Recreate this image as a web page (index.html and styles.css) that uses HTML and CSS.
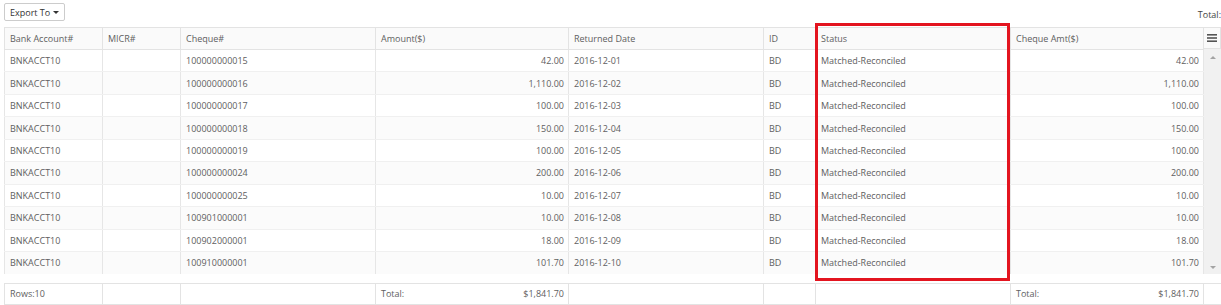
FILE: index.html
```html
<!DOCTYPE html>
<html>
<head>
<meta charset="utf-8">
<link rel="stylesheet" href="styles.css">
</head>
<body>
<div class="toolbar">
  <button class="export-btn">Export To <span class="caret"></span></button>
  <span class="top-total">Total:</span>
</div>
<div class="grid">
  <div class="grid-main">
    <table class="data">
      <colgroup>
        <col style="width:98px"><col style="width:78px"><col style="width:195px"><col style="width:193px">
        <col style="width:195px"><col style="width:52px"><col style="width:195px"><col style="width:193px">
      </colgroup>
      <thead>
        <tr><th>Bank Account#</th><th>MICR#</th><th>Cheque#</th><th>Amount($)</th><th>Returned Date</th><th>ID</th><th>Status</th><th>Cheque Amt($)</th></tr>
      </thead>
      <tbody>
        <tr><td>BNKACCT10</td><td></td><td>100000000015</td><td class="num">42.00</td><td>2016-12-01</td><td>BD</td><td>Matched-Reconciled</td><td class="num">42.00</td></tr>
        <tr><td>BNKACCT10</td><td></td><td>100000000016</td><td class="num">1,110.00</td><td>2016-12-02</td><td>BD</td><td>Matched-Reconciled</td><td class="num">1,110.00</td></tr>
        <tr><td>BNKACCT10</td><td></td><td>100000000017</td><td class="num">100.00</td><td>2016-12-03</td><td>BD</td><td>Matched-Reconciled</td><td class="num">100.00</td></tr>
        <tr><td>BNKACCT10</td><td></td><td>100000000018</td><td class="num">150.00</td><td>2016-12-04</td><td>BD</td><td>Matched-Reconciled</td><td class="num">150.00</td></tr>
        <tr><td>BNKACCT10</td><td></td><td>100000000019</td><td class="num">100.00</td><td>2016-12-05</td><td>BD</td><td>Matched-Reconciled</td><td class="num">100.00</td></tr>
        <tr><td>BNKACCT10</td><td></td><td>100000000024</td><td class="num">200.00</td><td>2016-12-06</td><td>BD</td><td>Matched-Reconciled</td><td class="num">200.00</td></tr>
        <tr><td>BNKACCT10</td><td></td><td>100000000025</td><td class="num">10.00</td><td>2016-12-07</td><td>BD</td><td>Matched-Reconciled</td><td class="num">10.00</td></tr>
        <tr><td>BNKACCT10</td><td></td><td>100901000001</td><td class="num">10.00</td><td>2016-12-08</td><td>BD</td><td>Matched-Reconciled</td><td class="num">10.00</td></tr>
        <tr><td>BNKACCT10</td><td></td><td>100902000001</td><td class="num">18.00</td><td>2016-12-09</td><td>BD</td><td>Matched-Reconciled</td><td class="num">18.00</td></tr>
        <tr><td>BNKACCT10</td><td></td><td>100910000001</td><td class="num">101.70</td><td>2016-12-10</td><td>BD</td><td>Matched-Reconciled</td><td class="num">101.70</td></tr>
      </tbody>
    </table>
    <div class="vscroll">
      <div class="menu-cell">
        <svg width="10" height="8" viewBox="0 0 10 8"><rect x="0" y="0" width="10" height="1.6" fill="#555"/><rect x="0" y="3.2" width="10" height="1.6" fill="#555"/><rect x="0" y="6.4" width="10" height="1.6" fill="#555"/></svg>
      </div>
      <div class="track">
        <span class="arrow up"></span>
        <span class="arrow down"></span>
      </div>
    </div>
  </div>
  <table class="footer">
    <colgroup>
      <col style="width:98px"><col style="width:78px"><col style="width:195px"><col style="width:193px">
      <col style="width:195px"><col style="width:52px"><col style="width:195px"><col style="width:193px"><col style="width:18px">
    </colgroup>
    <tr>
      <td>Rows:10</td><td></td><td></td>
      <td><div class="tot"><span>Total:</span><span>$1,841.70</span></div></td>
      <td></td><td></td><td></td>
      <td><div class="tot"><span>Total:</span><span>$1,841.70</span></div></td>
      <td class="blank"></td>
    </tr>
  </table>
  <div class="highlight"></div>
</div>
</body>
</html>
```

FILE: styles.css
```css
html, body {
  margin: 0;
  padding: 0;
  background: #fff;
  font-family: "Open Sans", "Noto Sans", sans-serif;
  font-size: 9px;
  color: #606060;
  width: 1221px;
  overflow: hidden;
}

.toolbar {
  height: 27px;
  display: flex;
  justify-content: space-between;
  align-items: flex-start;
}

.export-btn {
  margin: 3px 0 0 4px;
  height: 18px;
  padding: 0 5px;
  border: 1px solid #ccc;
  border-radius: 2px;
  background: #fff;
  font-family: inherit;
  font-size: 9px;
  color: #333;
  display: flex;
  align-items: center;
  gap: 3px;
  white-space: nowrap;
}

.caret {
  display: inline-block;
  width: 0;
  height: 0;
  border-left: 3px solid transparent;
  border-right: 3px solid transparent;
  border-top: 3px solid #333;
  margin-top: 1px;
}

.top-total {
  margin-top: 8px;
  color: #444;
}

.grid {
  position: relative;
  margin-left: 4px;
  width: 1217px;
}

.grid-main {
  display: flex;
}

table {
  border-collapse: collapse;
  table-layout: fixed;
}

.data {
  width: 1199px;
}

.data th {
  height: 21px;
  font-weight: normal;
  text-align: left;
  padding: 0 5px;
  background: #fafafa;
  border: 1px solid #e3e3e3;
  white-space: nowrap;
  overflow: hidden;
}

.data td {
  height: 22.45px;
  padding: 0 4px 0 5px;
  border-left: 1px solid #e6e6e6;
  border-right: 1px solid #e6e6e6;
  border-bottom: 1px solid #f0f0f0;
  white-space: nowrap;
  box-sizing: border-box;
}

.data tbody tr:nth-child(even) td {
  background: #fbfbfb;
}

.data tbody tr:last-child td {
  border-bottom: none;
}

.data td.num {
  text-align: right;
}

.vscroll {
  width: 18px;
  display: flex;
  flex-direction: column;
}

.menu-cell {
  height: 22px;
  box-sizing: border-box;
  border: 1px solid #e3e3e3;
  border-left: none;
  background: #fafafa;
  display: flex;
  align-items: center;
  justify-content: center;
}

.track {
  flex: 1;
  background: #f1f1f1;
  display: flex;
  flex-direction: column;
  justify-content: space-between;
  align-items: center;
  padding: 7px 0 5px;
}

.arrow {
  width: 0;
  height: 0;
  border-left: 3.5px solid transparent;
  border-right: 3.5px solid transparent;
}

.arrow.up {
  border-bottom: 3.5px solid #a3a3a3;
}

.arrow.down {
  border-top: 3.5px solid #a3a3a3;
}

.footer {
  margin-top: 9px;
  width: 1217px;
}

.footer td {
  height: 21px;
  padding: 0 4px 0 5px;
  border: 1px solid #e3e3e3;
  white-space: nowrap;
  box-sizing: border-box;
}

.footer td.blank {
  border-left: none;
  border-right: none;
}

.tot {
  display: flex;
  justify-content: space-between;
}

.highlight {
  position: absolute;
  left: 811px;
  top: -4px;
  width: 195px;
  height: 258px;
  box-sizing: border-box;
  border: 3px solid #e3141f;
  pointer-events: none;
}
```
